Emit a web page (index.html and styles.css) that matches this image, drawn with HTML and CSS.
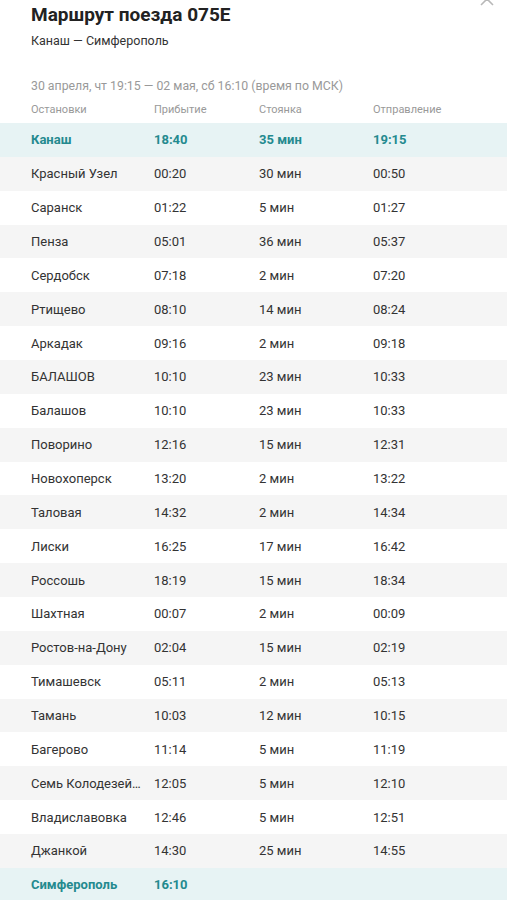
FILE: index.html
```html
<!DOCTYPE html>
<html lang="ru">
<head>
<meta charset="utf-8">
<link rel="stylesheet" href="styles.css">
</head>
<body>
<div class="modal">
  <svg class="close" width="14" height="14" viewBox="0 0 14 14"><path d="M1 1L13 13M13 1L1 13" stroke="#b8b8b8" stroke-width="1.6" fill="none"/></svg>
  <header class="head">
    <h1 class="title">Маршрут поезда 075E</h1>
    <div class="route">Канаш — Симферополь</div>
    <div class="dates">30 апреля, чт 19:15 — 02 мая, сб 16:10 (время по МСК)</div>
  </header>
  <div class="table">
    <div class="row thead"><span>Остановки</span><span>Прибытие</span><span>Стоянка</span><span>Отправление</span></div>
    <div class="row hl"><span>Канаш</span><span>18:40</span><span>35 мин</span><span>19:15</span></div>
    <div class="row"><span>Красный Узел</span><span>00:20</span><span>30 мин</span><span>00:50</span></div>
    <div class="row"><span>Саранск</span><span>01:22</span><span>5 мин</span><span>01:27</span></div>
    <div class="row"><span>Пенза</span><span>05:01</span><span>36 мин</span><span>05:37</span></div>
    <div class="row"><span>Сердобск</span><span>07:18</span><span>2 мин</span><span>07:20</span></div>
    <div class="row"><span>Ртищево</span><span>08:10</span><span>14 мин</span><span>08:24</span></div>
    <div class="row"><span>Аркадак</span><span>09:16</span><span>2 мин</span><span>09:18</span></div>
    <div class="row"><span>БАЛАШОВ</span><span>10:10</span><span>23 мин</span><span>10:33</span></div>
    <div class="row"><span>Балашов</span><span>10:10</span><span>23 мин</span><span>10:33</span></div>
    <div class="row"><span>Поворино</span><span>12:16</span><span>15 мин</span><span>12:31</span></div>
    <div class="row"><span>Новохоперск</span><span>13:20</span><span>2 мин</span><span>13:22</span></div>
    <div class="row"><span>Таловая</span><span>14:32</span><span>2 мин</span><span>14:34</span></div>
    <div class="row"><span>Лиски</span><span>16:25</span><span>17 мин</span><span>16:42</span></div>
    <div class="row"><span>Россошь</span><span>18:19</span><span>15 мин</span><span>18:34</span></div>
    <div class="row"><span>Шахтная</span><span>00:07</span><span>2 мин</span><span>00:09</span></div>
    <div class="row"><span>Ростов-на-Дону</span><span>02:04</span><span>15 мин</span><span>02:19</span></div>
    <div class="row"><span>Тимашевск</span><span>05:11</span><span>2 мин</span><span>05:13</span></div>
    <div class="row"><span>Тамань</span><span>10:03</span><span>12 мин</span><span>10:15</span></div>
    <div class="row"><span>Багерово</span><span>11:14</span><span>5 мин</span><span>11:19</span></div>
    <div class="row"><span>Семь Колодезей…</span><span>12:05</span><span>5 мин</span><span>12:10</span></div>
    <div class="row"><span>Владиславовка</span><span>12:46</span><span>5 мин</span><span>12:51</span></div>
    <div class="row"><span>Джанкой</span><span>14:30</span><span>25 мин</span><span>14:55</span></div>
    <div class="row hl"><span>Симферополь</span><span>16:10</span><span></span><span></span></div>
  </div>
</div>
</body>
</html>
```

FILE: styles.css
```css
html, body {
  margin: 0;
  padding: 0;
  background: #fff;
}
body {
  font-family: Roboto, "Noto Sans", sans-serif;
  color: #333;
  overflow: hidden;
}
.modal {
  position: relative;
  width: 507px;
}
.close {
  position: absolute;
  top: -8px;
  right: 13px;
}
.head {
  padding: 4px 0 0 31px;
}
.title {
  margin: 0;
  font-size: 19px;
  line-height: 22px;
  font-weight: 700;
  color: #222;
}
.route {
  margin-top: 7px;
  font-size: 12.5px;
  line-height: 16px;
  color: #333;
}
.dates {
  margin-top: 29px;
  font-size: 12.3px;
  line-height: 16px;
  color: #999;
}
.table {
  margin-top: 9px;
}
.row {
  display: grid;
  grid-template-columns: 123px 105px 114px 1fr;
  align-items: center;
  height: 33.86px;
  padding-left: 31px;
  font-size: 13px;
  color: #333;
}
.row:nth-child(odd) {
  background: #f5f5f5;
}
.row.thead {
  height: 20px;
  font-size: 11px;
  color: #999;
  background: #fff;
  align-items: start;
}
.row.hl {
  background: #e7f3f4;
  color: #248a8f;
  font-weight: 700;
}
.row span {
  white-space: nowrap;
}
```
